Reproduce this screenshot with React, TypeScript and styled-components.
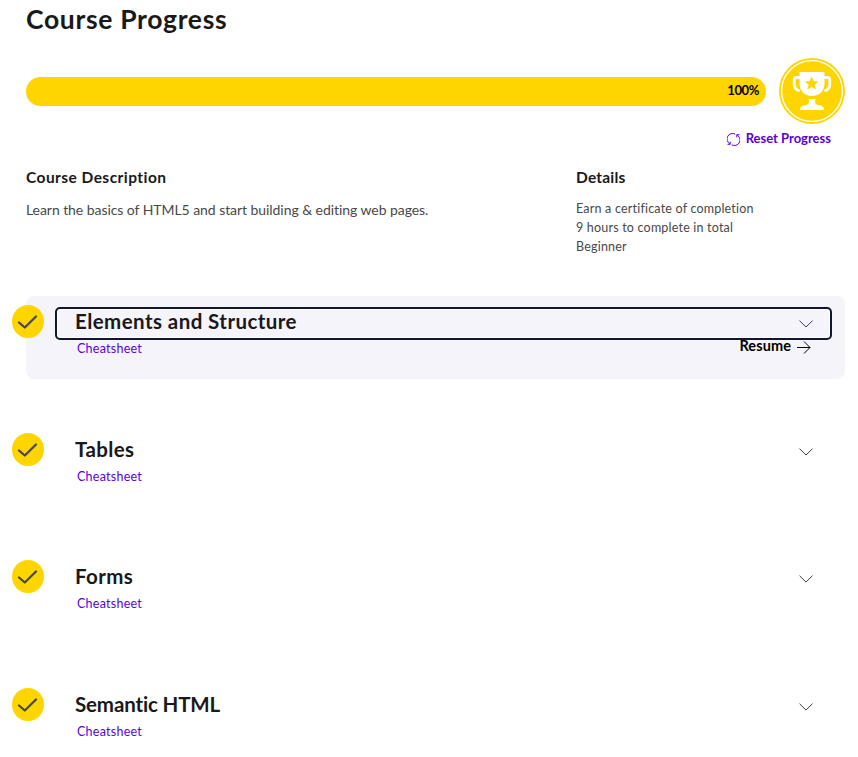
import React from "react";
import styled, { createGlobalStyle } from "styled-components";

const GlobalStyle = createGlobalStyle`
  *, *::before, *::after { box-sizing: border-box; }
  body { margin: 0; background: #fff; overflow: hidden; }
  h1, h2, h3, p, ul { margin: 0; padding: 0; }
  button { font: inherit; border: 0; background: none; padding: 0; }
`;

const Page = styled.main`
  height: 757px;
  overflow: hidden;
  padding: 0 13px 0 26px;
  font-family: Lato, "Open Sans", sans-serif;
  color: #19191a;
`;

const PageTitle = styled.h1`
  height: 58px;
  padding-top: 3px;
  font-size: 26.5px;
  font-weight: 700;
  line-height: 32px;
  letter-spacing: 0.67px;
`;

const ProgressRow = styled.div`
  display: flex;
  align-items: center;
  gap: 13px;
  height: 66px;
`;

const ProgressBar = styled.div`
  display: flex;
  align-items: center;
  justify-content: flex-end;
  flex: 1;
  height: 29px;
  padding: 0 7px 2px 0;
  border-radius: 15px;
  background: #ffd500;
  color: #000;
  font-size: 13px;
  font-weight: 700;
  letter-spacing: -0.4px;
`;

const Trophy = styled.svg`
  width: 66px;
  height: 66px;
`;

const ResetButton = styled.button`
  display: flex;
  align-items: center;
  gap: 6px;
  margin: 5px 14px 0 auto;
  height: 20px;
  color: #5b00db;
  font-size: 13px;
  font-weight: 700;
`;

const ResetLabel = styled.span`
  padding-bottom: 2px;
`;

const Info = styled.section`
  display: grid;
  grid-template-columns: 550px 1fr;
  height: 147px;
  padding-top: 18px;
`;

const InfoTitle = styled.h3<{ $spacing: number }>`
  font-size: 15.5px;
  font-weight: 700;
  line-height: 20px;
  letter-spacing: ${(p) => p.$spacing}px;
`;

const Description = styled.p`
  margin-top: 12px;
  color: #484848;
  font-size: 14px;
  line-height: 21px;
  letter-spacing: -0.06px;
`;

const Details = styled.ul`
  margin-top: 12px;
  color: #484848;
  font-size: 12.5px;
  line-height: 19px;
  letter-spacing: 0.2px;
  font-variant-ligatures: none;
  list-style: none;
`;

const Modules = styled.div`
  display: flex;
  flex-direction: column;
  gap: 44.7px;
`;

const Card = styled.section<{ $current?: boolean }>`
  display: grid;
  grid-template-columns: 29px 1fr;
  align-items: start;
  height: 83px;
  padding: 9px 13px 0 0;
  border-radius: 8px;
  background: ${(p) => (p.$current ? "#f5f4fa" : "transparent")};
`;

const Badge = styled.svg`
  width: 32px;
  height: 33px;
  margin-left: -14px;
`;

const Content = styled.div`
  padding-top: 2px;
`;

const Toggle = styled.button<{ $focused?: boolean }>`
  display: flex;
  align-items: center;
  justify-content: space-between;
  width: 100%;
  height: 33px;
  padding: 0 17.5px 0 18px;
  border: 2px solid ${(p) => (p.$focused ? "#10162f" : "transparent")};
  border-radius: 5px;
  box-shadow: ${(p) => (p.$focused ? "inset 0 0 0 1px #fff" : "none")};
  color: #19191a;
`;

const ModuleTitle = styled.h2<{ $spacing: number }>`
  padding-bottom: 5px;
  font-size: 20.5px;
  font-weight: 700;
  line-height: 26px;
  letter-spacing: ${(p) => p.$spacing}px;
`;

const Chevron = styled.svg`
  width: 14px;
  height: 8px;
  margin-top: 1px;
`;

const Links = styled.div`
  display: flex;
  justify-content: space-between;
  padding: 0 21px 0 22px;
`;

const Cheatsheet = styled.a`
  color: #5b00db;
  font-size: 12.5px;
  line-height: 18px;
  letter-spacing: 0.25px;
`;

const Resume = styled.a`
  display: flex;
  align-items: center;
  gap: 6px;
  height: 15px;
  color: #000;
  font-size: 14.5px;
  font-weight: 700;
  letter-spacing: 0.1px;
`;

const ResumeLabel = styled.span`
  padding-bottom: 4px;
`;

const modules = [
  { title: "Elements and Structure", current: true, spacing: 0.43 },
  { title: "Tables", spacing: 0.37 },
  { title: "Forms", spacing: 0.4 },
  { title: "Semantic HTML", spacing: -0.15 },
];

export default function App() {
  return (
    <>
      <GlobalStyle />
      <Page>
        <PageTitle>Course Progress</PageTitle>
        <ProgressRow>
          <ProgressBar>100%</ProgressBar>
          <Trophy viewBox="0 0 66 66">
            <circle cx="33" cy="33" r="33" fill="#ffd500" />
            <circle cx="33" cy="33" r="30.4" fill="none" stroke="#fff" strokeWidth="1.4" />
            <path d="M20.500 15q0-1 1-1h23q1 0 1 1v10c0 8-5 13-12.500 13s-12.500-5-12.500-13z" fill="#fff" />
            <path
              d="M21 19.500h-3.300q-2.500 0-2.500 3V26q0 5 4.300 6.500M45 19.500h3.300q2.500 0 2.500 3V26q0 5-4.300 6.500"
              fill="none"
              stroke="#fff"
              strokeWidth="2.800"
              strokeLinecap="round"
            />
            <path
              d="M29.500 41h7q-1.500 5 2 6 3 .3 5 1.500 1.500 1.200 1.500 2.500 0 1-1 1h-22q-1 0-1-1 0-1.300 1.500-2.500 2-1.200 5-1.500 3.500-1 2-6z"
              fill="#fff"
            />
            <path
              d="m32.700 18.300 1.900 4.900 5 .3-3.900 3.200 1.300 4.900-4.300-2.700-4.300 2.700 1.300-4.900-3.900-3.200 5-.3z"
              fill="#ffd500"
            />
          </Trophy>
        </ProgressRow>
        <ResetButton>
          <svg width="13" height="13" viewBox="0 0 13 13" fill="none" stroke="#5b00db">
            <path d="M2.800 10.800A5.400 5.400 0 0 1 8.300 1.200M10.200 2.200A5.400 5.400 0 0 1 4.700 11.800M.5 11.300h2.700V8.700M12.500 1.700H9.800v2.600" />
          </svg>
          <ResetLabel>Reset Progress</ResetLabel>
        </ResetButton>
        <Info>
          <div>
            <InfoTitle $spacing={0.45}>Course Description</InfoTitle>
            <Description>
              Learn the basics of HTML5 and start building &amp; editing web pages.
            </Description>
          </div>
          <div>
            <InfoTitle $spacing={0.2}>Details</InfoTitle>
            <Details>
              <li>Earn a certificate of completion</li>
              <li>9 hours to complete in total</li>
              <li>Beginner</li>
            </Details>
          </div>
        </Info>
        <Modules>
          {modules.map((m) => (
            <Card key={m.title} $current={m.current}>
              <Badge viewBox="0 0 32 33">
                <ellipse cx="16" cy="16.500" rx="16" ry="16.500" fill="#ffd500" />
                <path
                  d="m7 17.500 5.800 5L24 11.500"
                  fill="none"
                  stroke="#484848"
                  strokeWidth="2.300"
                  strokeLinecap="round"
                  strokeLinejoin="round"
                />
              </Badge>
              <Content>
                <Toggle $focused={m.current}>
                  <ModuleTitle $spacing={m.spacing}>{m.title}</ModuleTitle>
                  <Chevron viewBox="0 0 14 8" fill="none" stroke="#3a3f58">
                    <path d="m.5.7 6.500 6.300L13.500.7" />
                  </Chevron>
                </Toggle>
                <Links>
                  <Cheatsheet>Cheatsheet</Cheatsheet>
                  {m.current && (
                    <Resume>
                      <ResumeLabel>Resume</ResumeLabel>
                      <svg width="14" height="13" viewBox="0 0 14 13" fill="none" stroke="#000">
                        <path d="M0 6.500h13M7 .5l6 6-6 6" />
                      </svg>
                    </Resume>
                  )}
                </Links>
              </Content>
            </Card>
          ))}
        </Modules>
      </Page>
    </>
  );
}
